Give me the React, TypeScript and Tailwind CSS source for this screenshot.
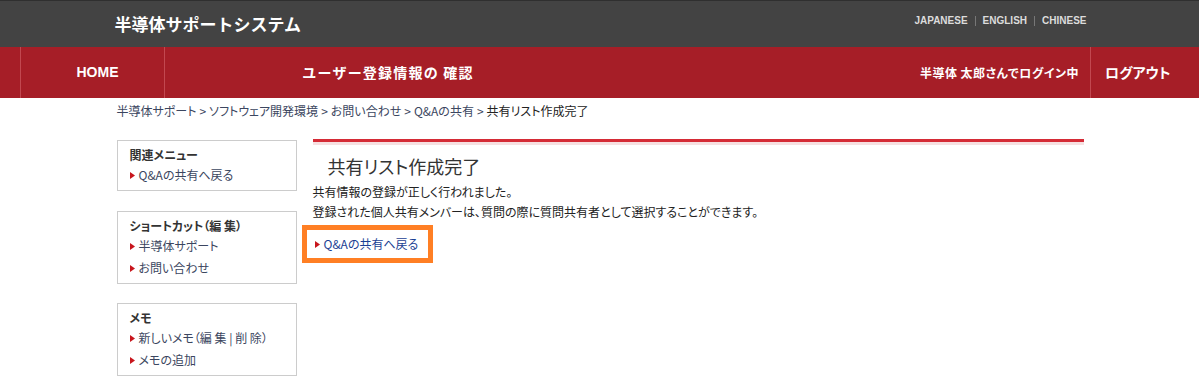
const jp = "font-['Noto_Sans_CJK_JP','Noto_Sans',sans-serif] [font-feature-settings:'palt']";

function Bullet() {
  return (
    <svg width="5" height="7" viewBox="0 0 5 7" className="shrink-0">
      <path d="M0 0 L5 3.5 L0 7 Z" fill="#c8161d" />
    </svg>
  );
}

function SideBox({ title, items, className = "" }: { title: string; items: string[]; className?: string }) {
  return (
    <div className={`border border-[#cccccc] bg-white pl-[12px] pt-[5px] pb-[4px] ${className}`}>
      <p className="text-[12px] leading-[18px] font-bold text-[#333333]">{title}</p>
      <ul>
        {items.map((it) => (
          <li key={it} className="flex items-center gap-[4px] text-[12px] leading-[22px] text-[#3b4660]">
            <Bullet />
            <span>{it}</span>
          </li>
        ))}
      </ul>
    </div>
  );
}

export default function App() {
  const crumbs = ["半導体サポート", "ソフトウェア開発環境", "お問い合わせ", "Q&Aの共有"];

  return (
    <div className={`min-h-[391px] bg-white ${jp}`}>
      {/* top bar */}
      <header className="h-[47px] bg-[#434343] border-t border-[#2f2f2f]">
        <div className="mx-auto flex w-[1000px] justify-between">
          <h1 className="pl-[15px] pt-[12px] text-[17px] leading-[22px] font-bold text-white [font-feature-settings:normal]">
            半導体サポートシステム
          </h1>
          <div className="flex items-center pt-[5px] pr-[13px] font-['Liberation_Sans',Arial,sans-serif] text-[10px] font-bold leading-[14px] text-[#dcdcdc]">
            <span>JAPANESE</span>
            <span className="mx-[7px] h-[10px] w-px bg-[#777777]" />
            <span>ENGLISH</span>
            <span className="mx-[7px] h-[10px] w-px bg-[#777777]" />
            <span>CHINESE</span>
          </div>
        </div>
      </header>

      {/* nav */}
      <nav className="flex h-[51px] items-stretch bg-[#a61e27] pl-[20px] text-white font-bold">
        <div className="flex w-[145px] items-center justify-center border-x border-[#c24850] pl-[10px] font-['Liberation_Sans',Arial,sans-serif] text-[14px]">
          HOME
        </div>
        <div className="flex w-[446px] items-center justify-center text-[14px] tracking-[1.2px] [font-feature-settings:normal]">
          ユーザー登録情報の 確認
        </div>
        <div className="flex-1" />
        <div className="flex items-center pr-[11px] text-[12px] tracking-[0.5px]">半導体 太郎さんでログイン中</div>
        <div className="flex w-[109px] items-center border-l border-[#c24850] pl-[14px] text-[14px]">
          ログアウト
        </div>
      </nav>

      <div className="mx-auto w-[1000px] pl-[17px]">
        {/* breadcrumb */}
        <div className="pt-[5px] text-[12px] leading-[16px] text-[#3b4660]">
          {crumbs.map((c) => (
            <span key={c}>
              {c}
              <span className="mx-[3px]">&gt;</span>
            </span>
          ))}
          <span className="text-[#222222]">共有リスト作成完了</span>
        </div>

        <div className="mt-[20px] flex gap-[16px]">
          {/* sidebar */}
          <aside className="w-[180px] pt-px">
            <SideBox title="関連メニュー" items={["Q&Aの共有へ戻る"]} />
            <SideBox className="mt-[20px]" title="ショートカット（編 集）" items={["半導体サポート", "お問い合わせ"]} />
            <SideBox className="mt-[19px]" title="メモ" items={["新しいメモ（編 集 | 削 除）", "メモの追加"]} />
          </aside>

          {/* main */}
          <main className="w-[771px]">
            <div className="h-[3px] bg-[#d52b36]" />
            <div className="h-[3px] bg-[#f6e0e1]" />
            <h2 className="mt-[9px] pl-[15px] text-[18px] leading-[24px] text-[#333333]">共有リスト作成完了</h2>
            <p className="mt-[4px] text-[12px] leading-[20px] text-[#222222]">
              共有情報の登録が正しく行われました。
              <br />
              登録された個人共有メンバーは、質問の際に質問共有者として選択することができます。
            </p>
            <div className="ml-[-11px] mt-[3px] flex h-[38px] w-[131px] items-center gap-[4px] border-[5px] border-[#ff7f24] pl-[8px]">
              <Bullet />
              <span className="text-[12px] leading-[16px] text-[#1c3f94]">Q&amp;Aの共有へ戻る</span>
            </div>
          </main>
        </div>
      </div>
    </div>
  );
}
